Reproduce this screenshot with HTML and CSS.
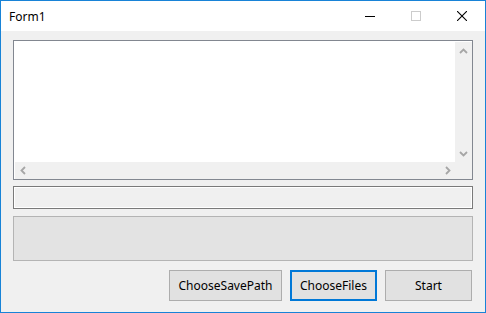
FILE: index.html
```html
<!DOCTYPE html>
<html lang="en">
<head>
    <meta charset="UTF-8">
    <title>Form1</title>
    <link rel="stylesheet" href="styles.css">
</head>
<body>

    <div class="window">
        <div class="titlebar">
            <span class="title">Form1</span>
            <div class="controls">
                <div class="ctl">
                    <svg width="10" height="10" viewBox="0 0 10 10"><path d="M0 5.5H10" stroke="#000" stroke-width="1"/></svg>
                </div>
                <div class="ctl">
                    <svg width="10" height="10" viewBox="0 0 10 10"><rect x="0.5" y="0.5" width="9" height="9" fill="none" stroke="#cccccc" stroke-width="1"/></svg>
                </div>
                <div class="ctl">
                    <svg width="10" height="10" viewBox="0 0 10 10"><path d="M0 0L10 10M10 0L0 10" stroke="#000" stroke-width="1.1"/></svg>
                </div>
            </div>
        </div>

        <div class="client">
            <div class="textbox">
                <div class="text-area"></div>
                <div class="vscroll">
                    <svg width="9" height="6" viewBox="0 0 9 6"><path d="M1 5L4.5 1.5L8 5" fill="none" stroke="#a6a6a6" stroke-width="1.8"/></svg>
                    <svg width="9" height="6" viewBox="0 0 9 6"><path d="M1 1L4.5 4.5L8 1" fill="none" stroke="#a6a6a6" stroke-width="1.8"/></svg>
                </div>
                <div class="hscroll">
                    <svg width="6" height="9" viewBox="0 0 6 9"><path d="M5 1L1.5 4.5L5 8" fill="none" stroke="#a6a6a6" stroke-width="1.8"/></svg>
                    <svg width="6" height="9" viewBox="0 0 6 9"><path d="M1 1L4.5 4.5L1 8" fill="none" stroke="#a6a6a6" stroke-width="1.8"/></svg>
                </div>
                <div class="corner"></div>
            </div>

            <div class="progress"></div>

            <div class="panel"></div>

            <div class="buttons">
                <button class="btn btn-wide">ChooseSavePath</button>
                <button class="btn focused">ChooseFiles</button>
                <button class="btn">Start</button>
            </div>
        </div>
    </div>

</body>
</html>
```

FILE: styles.css
```css
body, html {
    width: 100%;
    height: 100%;
    margin: 0;
}
body {
    font-family: "Noto Sans", "Open Sans", sans-serif;
    font-size: 12px;
    color: #000;
    background: #f0f0f0;
}
.window {
    box-sizing: border-box;
    width: 486px;
    height: 313px;
    border: 1px solid #1883d7;
    display: flex;
    flex-direction: column;
}
.titlebar {
    height: 30px;
    background: #fff;
    display: flex;
    align-items: center;
    justify-content: space-between;
}
.title {
    padding-left: 8px;
    font-size: 12px;
    color: #000;
}
.controls {
    display: flex;
    height: 100%;
}
.ctl {
    width: 46px;
    height: 100%;
    display: flex;
    align-items: center;
    justify-content: center;
}
.client {
    flex: 1;
    background: #f0f0f0;
    padding: 9px 12px 0 12px;
    display: flex;
    flex-direction: column;
}
.textbox {
    box-sizing: border-box;
    height: 140px;
    border: 1px solid #828790;
    background: #fff;
    padding: 1px 0 0 1px;
    display: grid;
    grid-template-columns: 1fr 17px;
    grid-template-rows: 1fr 17px;
}
.text-area {
    background: #fff;
}
.vscroll {
    background: #f0f0f0;
    display: flex;
    flex-direction: column;
    justify-content: space-between;
    align-items: center;
    padding: 6px 0 5px;
}
.hscroll {
    background: #f0f0f0;
    display: flex;
    justify-content: space-between;
    align-items: center;
    padding: 0 4px 0 5px;
}
.corner {
    background: #f0f0f0;
}
.progress {
    box-sizing: border-box;
    height: 23px;
    margin-top: 6px;
    border: 1px solid #7a7a7a;
    box-shadow: inset 0 0 0 1px #fff;
    background: #f0f0f0;
}
.panel {
    box-sizing: border-box;
    height: 45px;
    margin-top: 7px;
    border: 1px solid #b4b4b4;
    background: #e3e3e3;
}
.buttons {
    margin-top: 9px;
    padding-right: 1px;
    display: flex;
    justify-content: flex-end;
    gap: 8px;
}
.btn {
    box-sizing: border-box;
    width: 87px;
    height: 31px;
    border: 1px solid #adadad;
    background: #e1e1e1;
    font-family: "Noto Sans", "Open Sans", sans-serif;
    font-size: 12px;
    color: #000;
    padding: 0;
}
.btn-wide {
    width: 113px;
}
.focused {
    border: 2px solid #0078d7;
}
```
